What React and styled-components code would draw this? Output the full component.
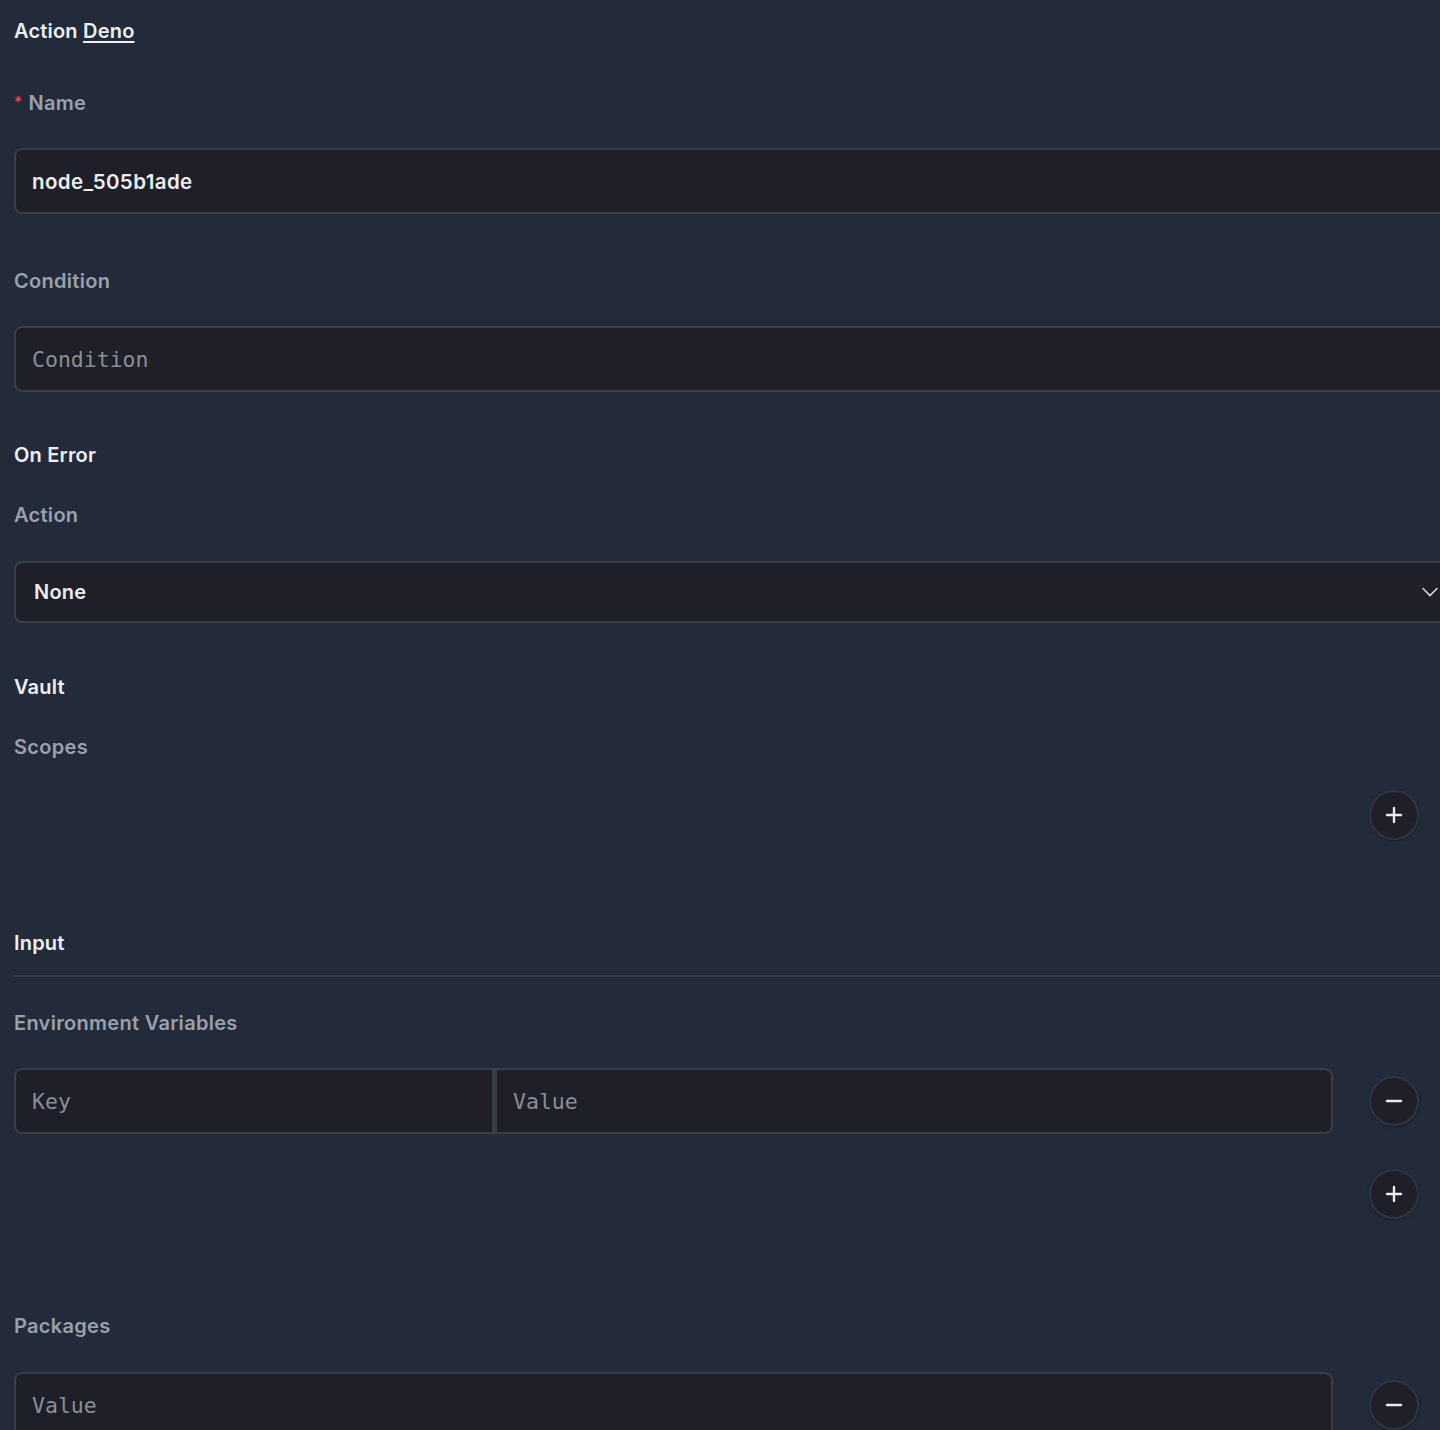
import React from 'react';
import styled, { createGlobalStyle } from 'styled-components';

const GlobalStyle = createGlobalStyle`
    html, body {
        margin: 0;
        padding: 0;
        background: #232b3a;
        overflow: hidden;
    }
    body {
        font-family: Inter, "Noto Sans", sans-serif;
        -webkit-font-smoothing: antialiased;
    }
`;

const Page = styled.div`
    min-height: 1430px;
    background: #232b3a;
    padding: 0 0 0 14px;
`;

const Form = styled.div`
    width: 1444px;
    display: flex;
    flex-direction: column;
`;

const Title = styled.h1`
    margin: 18px 0 0;
    font-size: 20px;
    font-weight: 600;
    color: #eef0f3;
    line-height: 26px;
    letter-spacing: 0.2px;

    a {
        color: inherit;
        text-decoration: underline;
        text-underline-offset: 3px;
        text-decoration-thickness: 1.5px;
    }
`;

const Heading = styled.h2`
    margin: ${(p) => p.top || 0}px 0 0;
    font-size: 20px;
    font-weight: 600;
    color: #eef0f3;
    line-height: 26px;
    letter-spacing: 0.2px;
`;

const Label = styled.label`
    display: block;
    margin-top: ${(p) => p.top || 0}px;
    font-size: 20px;
    font-weight: 600;
    color: #9aa1ad;
    line-height: 26px;
    letter-spacing: 0.3px;
`;

const Required = styled.span`
    color: #e5484d;
    margin-right: 6px;
    font-size: 15px;
    vertical-align: 3px;
`;

const TextBox = styled.input`
    box-sizing: border-box;
    display: block;
    width: 100%;
    height: 66px;
    margin-top: ${(p) => p.top || 0}px;
    padding: 0 16px;
    background: #1e1f28;
    border: 2px solid #393e49;
    border-radius: 8px;
    outline: none;
    color: #eceef1;
    font-family: ${(p) => (p.mono ? '"DejaVu Sans Mono", "Liberation Mono", monospace' : 'Inter, "Noto Sans", sans-serif')};
    font-size: ${(p) => (p.mono ? 21.5 : 20.5)}px;
    font-weight: ${(p) => (p.mono ? 400 : 600)};
    letter-spacing: ${(p) => (p.mono ? 0 : 0.4)}px;

    &::placeholder {
        color: #8b8e96;
    }
`;

const Select = styled.div`
    box-sizing: border-box;
    margin-top: 33px;
    height: 62px;
    padding: 0 18px;
    display: flex;
    align-items: center;
    justify-content: space-between;
    background: #1e1f28;
    border: 2px solid #393e49;
    border-radius: 8px;
    color: #eceef1;
    font-size: 20px;
    font-weight: 600;
    letter-spacing: 0.2px;
`;

const Chevron = () => (
    <svg width="16" height="16" viewBox="0 0 16 16" fill="none" stroke="#d6d8dc" strokeWidth="1.6" strokeLinecap="round">
        <path d="M1 4.5l7 7 7-7" />
    </svg>
);

const Row = styled.div`
    display: grid;
    grid-template-columns: 1319px 50px;
    column-gap: 36px;
    align-items: center;
    margin-top: ${(p) => p.top || 0}px;
`;

const Pair = styled.div`
    display: grid;
    grid-template-columns: 480px 1fr;
    column-gap: 0;
`;

const PairBox = styled(TextBox)`
    border-radius: ${(p) => (p.left ? '8px 0 0 8px' : '0 8px 8px 0')};
    border-left-width: ${(p) => (p.left ? 2 : 3)}px;
`;

const RoundButton = styled.button`
    width: 50px;
    height: 50px;
    border-radius: 50%;
    padding: 0;
    display: flex;
    align-items: center;
    justify-content: center;
    background: #1e1f28;
    border: 2px solid #2f3542;
    box-shadow: 0 1px 3px rgba(0, 0, 0, 0.35);
    cursor: pointer;
`;

const Divider = styled.hr`
    margin: 19px 0 0;
    border: none;
    border-top: 2px solid #333a47;
`;

const Plus = () => (
    <svg width="18" height="18" viewBox="0 0 18 18" stroke="#e8eaee" strokeWidth="2.4" strokeLinecap="round">
        <path d="M9 2v14M2 9h14" />
    </svg>
);

const Minus = () => (
    <svg width="18" height="18" viewBox="0 0 18 18" stroke="#e8eaee" strokeWidth="2.4" strokeLinecap="round">
        <path d="M2 9h14" />
    </svg>
);

export default function App() {
    return (
        <Page>
            <GlobalStyle />
            <Form>
                <Title>
                    Action <a href="#deno">Deno</a>
                </Title>

                <Label top={45}>
                    <Required>*</Required>Name
                </Label>
                <TextBox top={32} defaultValue="node_505b1ade" />

                <Label top={54}>Condition</Label>
                <TextBox top={32} mono placeholder="Condition" />

                <Heading top={50}>On Error</Heading>
                <Label top={34}>Action</Label>
                <Select>
                    None
                    <Chevron />
                </Select>

                <Heading top={51}>Vault</Heading>
                <Label top={34}>Scopes</Label>
                <Row top={30}>
                    <span />
                    <RoundButton aria-label="Add scope"><Plus /></RoundButton>
                </Row>

                <Heading top={90}>Input</Heading>
                <Divider />

                <Label top={33}>Environment Variables</Label>
                <Row top={32}>
                    <Pair>
                        <PairBox left mono placeholder="Key" />
                        <PairBox mono placeholder="Value" />
                    </Pair>
                    <RoundButton aria-label="Remove variable"><Minus /></RoundButton>
                </Row>
                <Row top={35}>
                    <span />
                    <RoundButton aria-label="Add variable"><Plus /></RoundButton>
                </Row>

                <Label top={94}>Packages</Label>
                <Row top={33}>
                    <TextBox mono placeholder="Value" />
                    <RoundButton aria-label="Remove package"><Minus /></RoundButton>
                </Row>
            </Form>
        </Page>
    );
}
